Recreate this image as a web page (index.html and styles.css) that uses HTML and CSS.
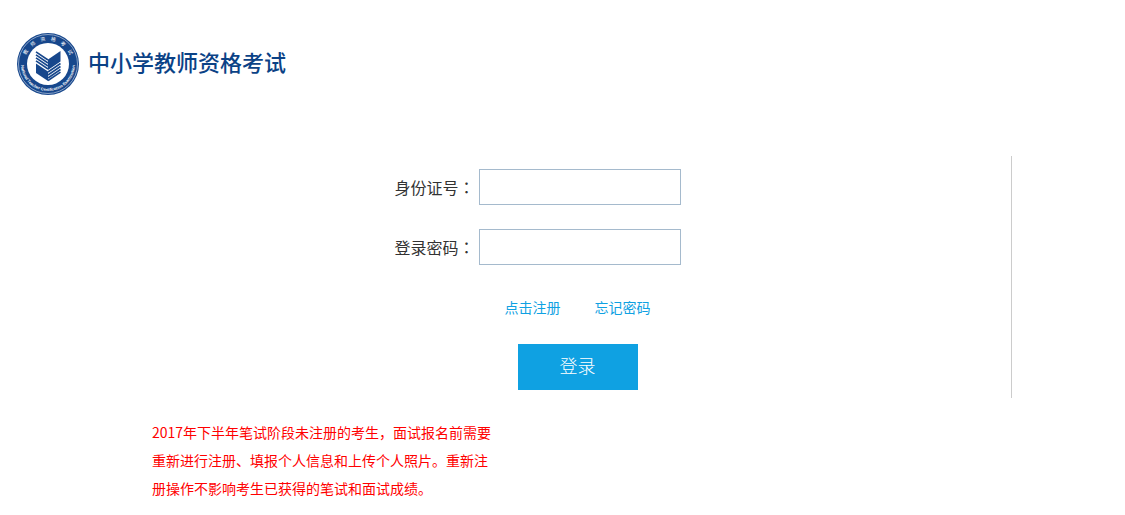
FILE: index.html
```
<!DOCTYPE html>
<html lang="zh-CN">
<head>
    <meta charset="UTF-8">
    <meta name="viewport" content="width=device-width, initial-scale=1.0">
    <title>中小学教师资格考试</title>
    <link rel="stylesheet" href="styles.css">
</head>
<body>
    <header class="header">
        <svg class="logo" viewBox="0 0 62 62" aria-hidden="true">
            <defs>
                <path id="arc-top" d="M7.500 31a23.500 23.500 0 0 1 47 0"/>
                <path id="arc-bottom" d="M4 31a27 27 0 0 0 54 0"/>
            </defs>
            <circle cx="31" cy="31" r="31" fill="#17478c"/>
            <circle cx="31" cy="31" r="29.500" fill="none" stroke="#b9c9e0" stroke-width="0.700"/>
            <circle cx="31" cy="31" r="21" fill="#fff"/>
            <text class="seal-cn"><textPath href="#arc-top" startOffset="50%" text-anchor="middle">教　师　资　格　考　试</textPath></text>
            <text class="seal-en"><textPath href="#arc-bottom" startOffset="50%" text-anchor="middle">National Teacher Certification Examination</textPath></text>
            <!-- open book -->
            <g fill="#17478c">
                <path d="M31 26.500 43.500 18v10.500L31 37z"/>
                <path d="M19 30.500 31 38.500v9.500L19 40z"/>
            </g>
            <g fill="none" stroke="#17478c" stroke-width="1.600">
                <path d="M19 18.800 31 27M19 21.800 31 30M19 24.800 31 33M19 27.800 31 36"/>
                <path d="M43.500 30.500 31 39M43.500 33.500 31 42M43.500 36.500 31 45M43.500 39.200 31 47.500"/>
            </g>
        </svg>
        <h1 class="title">中小学教师资格考试</h1>
    </header>

    <main class="main">
        <form class="login">
            <div class="row">
                <label for="idcard">身份证号<span lang="zh-TW">：</span></label>
                <input type="text" id="idcard" name="idcard">
            </div>
            <div class="row">
                <label for="password">登录密码<span lang="zh-TW">：</span></label>
                <input type="password" id="password" name="password">
            </div>
            <div class="links">
                <a href="#register">点击注册</a>
                <a href="#forgot">忘记密码</a>
            </div>
            <button type="submit" class="submit">登录</button>
        </form>
        <p class="notice">2017年下半年笔试阶段未注册的考生，面试报名前需要重新进行注册、填报个人信息和上传个人照片。重新注册操作不影响考生已获得的笔试和面试成绩。</p>
    </main>
</body>
</html>
```

FILE: styles.css
```
* {
    margin: 0;
    padding: 0;
    box-sizing: border-box;
}

body {
    font-family: "Noto Sans CJK SC", sans-serif;
    font-size: 14px;
    color: #333;
    background: #fff;
}

.header {
    display: flex;
    align-items: center;
    gap: 9px;
    padding: 33px 17px 0;
}

.logo {
    width: 62px;
    height: 62px;
}

.seal-cn {
    font-size: 5px;
    fill: #fff;
}

.seal-en {
    font-family: "Liberation Sans", sans-serif;
    font-size: 4px;
    font-weight: bold;
    fill: #fff;
}

.title {
    padding-bottom: 6px;
    font-size: 22px;
    font-weight: 500;
    line-height: 32px;
    color: #0b4286;
}

.main {
    padding: 61px 113px 12px 144px;
}

.login {
    display: flex;
    flex-direction: column;
    align-items: center;
    padding: 13px 0 8px;
    border-right: 1px solid #ccc;
}

/* the empty last column keeps the fields centred over the button */
.row {
    display: grid;
    grid-template-columns: 80px 202px 76px;
    column-gap: 4px;
    align-items: center;
    margin-bottom: 24px;
}

.row label {
    font-size: 16px;
    white-space: nowrap;
}

/* centred form of the full-width colon */
.row label span {
    font-family: "Noto Sans CJK TC", sans-serif;
}

.row input {
    height: 36px;
    padding: 0 8px;
    border: 1px solid #a5bacd;
    font-size: 16px;
}

.links {
    display: flex;
    gap: 34px;
    margin-top: 8px;
    line-height: 20px;
}

.links a {
    color: #0fa1e2;
    text-decoration: none;
}

.submit {
    width: 120px;
    height: 46px;
    margin-top: 27px;
    padding-bottom: 4px;
    border: none;
    background: #0fa1e2;
    color: #fff;
    font-family: inherit;
    font-size: 18px;
    font-weight: 300;
    cursor: pointer;
}

.notice {
    max-width: 360px;
    margin-top: 20px;
    padding: 0 8px;
    line-height: 28px;
    color: #f00;
}
```
